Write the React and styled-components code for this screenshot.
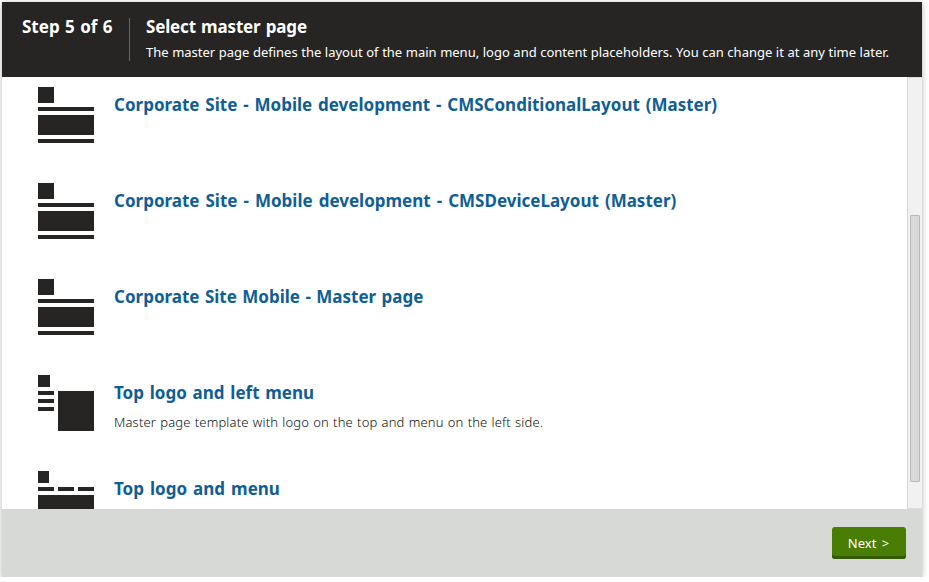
import React from 'react';
import styled, { createGlobalStyle } from 'styled-components';

const GlobalStyle = createGlobalStyle`
  * { box-sizing: border-box; }
  body { margin: 0; background: #fff; overflow: hidden; font-family: "Noto Sans", "Open Sans", sans-serif; }
  h1, h2, p { margin: 0; }
`;

const Dialog = styled.main`
  width: 920px;
  height: 575px;
  margin: 2px 0 0 2px;
  display: flex;
  flex-direction: column;
  background: #fff;
  box-shadow: 0 1px 6px rgba(0, 0, 0, 0.3);
`;

const Header = styled.header`
  height: 75px;
  flex: none;
  display: flex;
  padding: 16px 20px 0;
  background: #262524;
  color: #fff;
`;

const Heading = styled.h1`
  height: 18px;
  font-size: 17px;
  line-height: 18px;
  font-weight: 700;
  white-space: nowrap;
  word-spacing: 1px;
  letter-spacing: ${({ $spacing = 0 }) => $spacing}px;
`;

const Step = styled.div`
  width: 108px;
  height: 43px;
  flex: none;
  border-right: 1px solid #686766;
`;

const Intro = styled.div`
  padding-left: 16px;
`;

const Description = styled.p`
  margin-top: ${({ $light }) => ($light ? 7 : 11)}px;
  font-size: 13px;
  font-weight: ${({ $light }) => ($light ? 400 : 300)};
  line-height: 18px;
  white-space: nowrap;
  color: ${({ $light }) => ($light ? '#fff' : '#100f0e')};
  letter-spacing: ${({ $light }) => ($light ? 0 : 0.16)}px;
  word-spacing: ${({ $light }) => ($light ? 0.17 : 0.6)}px;
`;

const Content = styled.div`
  height: 432px;
  flex: none;
  display: flex;
  overflow: hidden;
`;

const TemplateList = styled.div`
  flex: 1;
  padding: 10px 0 0 36px;
  overflow: hidden;
`;

const Template = styled.article`
  height: 96px;
  display: flex;
  gap: 20px;
`;

const Thumbnail = styled.svg`
  width: 56px;
  height: 56px;
  flex: none;
  fill: #262524;
`;

const TemplateText = styled.div`
  padding-top: 9px;
`;

const TemplateTitle = styled.h2`
  font-size: 17px;
  line-height: 18px;
  font-weight: 700;
  color: #0f5e96;
  white-space: nowrap;
  word-spacing: ${({ $wordSpacing }) => $wordSpacing}px;
`;

const Scrollbar = styled.div`
  width: 15px;
  padding: 137px 2px 0;
  border-left: 1px solid #d6d6d6;
  border-top: 1px solid #dcdcdc;
  border-bottom: 1px solid #dcdcdc;
  background: #f1f1f1;
`;

const ScrollThumb = styled.div`
  width: 10px;
  height: 267px;
  border: 1px solid #b9b9b9;
  border-radius: 1px;
  background: #d9d9d9;
`;

const Footer = styled.footer`
  height: 68px;
  flex: none;
  display: flex;
  justify-content: flex-end;
  padding: 18px 16px;
  background: #d6d9d6;
`;

const NextButton = styled.button`
  width: 74px;
  height: 32px;
  padding: 1px 1px 0 0;
  border: 0;
  border-radius: 3px;
  background: #497d04;
  box-shadow: inset 0 -3px 0 #325903;
  color: #fff;
  font: 13px/31px "Noto Sans", "Open Sans", sans-serif;
  word-spacing: 2px;
`;

const shapes = {
  standard: [[0, 0, 16, 16], [0, 20, 56, 4], [0, 28, 56, 20], [0, 52, 56, 4]],
  left: [[0, 0, 12, 12], [0, 16, 16, 4], [0, 24, 16, 4], [0, 32, 16, 4], [20, 16, 36, 40]],
  menu: [[0, 0, 11, 12], [0, 16, 16, 4], [20, 16, 16, 4], [40, 16, 16, 4], [0, 24, 56, 32]],
};

const templates = [
  {
    title: 'Corporate Site - Mobile development - CMSConditionalLayout (Master)',
    kind: 'standard',
    wordSpacing: 1.45,
  },
  {
    title: 'Corporate Site - Mobile development - CMSDeviceLayout (Master)',
    kind: 'standard',
    wordSpacing: 1.6,
  },
  { title: 'Corporate Site Mobile - Master page', kind: 'standard', wordSpacing: 1 },
  {
    title: 'Top logo and left menu',
    kind: 'left',
    wordSpacing: 1.35,
    description: 'Master page template with logo on the top and menu on the left side.',
  },
  { title: 'Top logo and menu', kind: 'menu', wordSpacing: 1.6 },
];

function LayoutIcon({ kind }) {
  return (
    <Thumbnail viewBox="0 0 56 56" shapeRendering="crispEdges" aria-hidden="true">
      {shapes[kind].map(([x, y, width, height]) => (
        <rect key={`${x}-${y}`} x={x} y={y} width={width} height={height} />
      ))}
    </Thumbnail>
  );
}

export default function App() {
  return (
    <>
      <GlobalStyle />
      <Dialog>
        <Header>
          <Step>
            <Heading>Step 5 of 6</Heading>
          </Step>
          <Intro>
            <Heading $spacing={-0.17}>Select master page</Heading>
            <Description $light>
              The master page defines the layout of the main menu, logo and content placeholders. You can change it at any time later.
            </Description>
          </Intro>
        </Header>
        <Content>
          <TemplateList>
            {templates.map(({ title, kind, description, wordSpacing }) => (
              <Template key={title}>
                <LayoutIcon kind={kind} />
                <TemplateText>
                  <TemplateTitle $wordSpacing={wordSpacing}>{title}</TemplateTitle>
                  {description && <Description>{description}</Description>}
                </TemplateText>
              </Template>
            ))}
          </TemplateList>
          <Scrollbar>
            <ScrollThumb />
          </Scrollbar>
        </Content>
        <Footer>
          <NextButton>Next &gt;</NextButton>
        </Footer>
      </Dialog>
    </>
  );
}
